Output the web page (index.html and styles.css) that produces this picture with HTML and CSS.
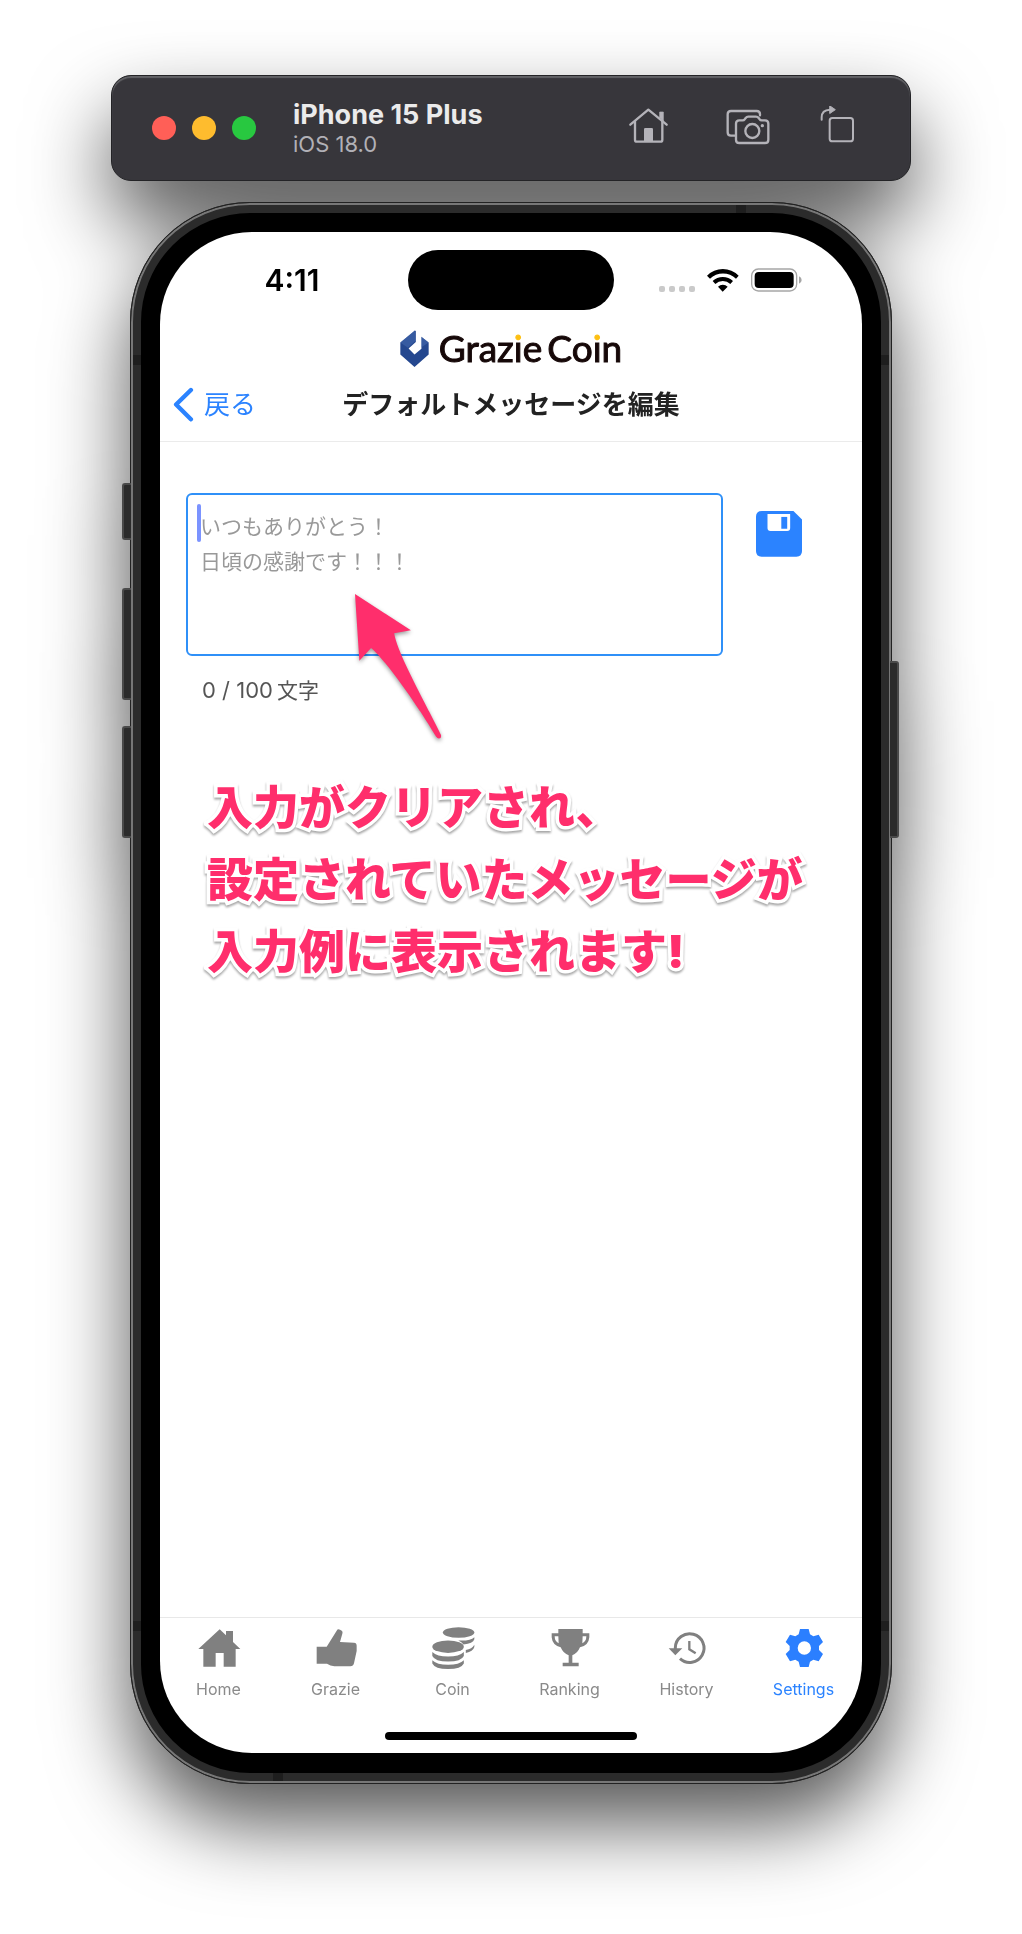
FILE: index.html
```html
<!DOCTYPE html>
<html lang="ja">
<head>
<meta charset="utf-8">
<meta name="viewport" content="width=device-width, initial-scale=1">
<title>Grazie Coin</title>
<link rel="stylesheet" href="styles.css">
</head>
<body>
<div class="simulator">
  <header class="toolbar">
    <div class="lights">
      <button class="light light-close" aria-label="Close"></button>
      <button class="light light-min" aria-label="Minimize"></button>
      <button class="light light-zoom" aria-label="Zoom"></button>
    </div>
    <div class="device">
      <strong class="device-name">iPhone 15 Plus</strong>
      <span class="device-os">iOS 18.0</span>
    </div>
    <div class="tools">
      <button class="tool" aria-label="Home">
        <svg viewBox="378 138 132 132" fill="none" stroke="currentColor" stroke-width="7" stroke-linecap="round" stroke-linejoin="round"><path d="M388 194 L442 149 L497 194"/><path d="M402 184V239Q402 245 408 245H478Q484 245 484 239V184"/><path d="M476 172V156H487V184Z" fill="currentColor" stroke-width="2"/><path d="M429 245V208Q429 204 433 204H452Q456 204 456 208V245Z" fill="currentColor" stroke="none"/></svg>
      </button>
      <button class="tool tool-shot" aria-label="Screenshot">
        <svg viewBox="676 138 132 132" fill="none" stroke="currentColor" stroke-width="7" stroke-linecap="round" stroke-linejoin="round"><path d="M703 227H691Q681 227 681 217V163Q681 153 691 153H768Q778 153 778 163V166"/><path d="M716 181H726Q730 181 732 178L735 174Q738 170 743 170H766Q771 170 774 174L777 178Q779 181 783 181H793Q803 181 803 191V239Q803 249 793 249H716Q706 249 706 239V191Q706 181 716 181Z"/><circle cx="755" cy="213" r="21"/><circle cx="785" cy="197" r="5" fill="currentColor" stroke="none"/></svg>
      </button>
      <button class="tool" aria-label="Rotate">
        <svg viewBox="943 138 132 132" fill="none" stroke="currentColor" stroke-width="6" stroke-linecap="round" stroke-linejoin="round"><rect x="987" y="174" width="70" height="70" rx="8"/><path d="M963 179V172Q963 150 988 149"/><path d="M988 138L1004 149L988 160Z" fill="currentColor" stroke-width="3"/></svg>
      </button>
    </div>
  </header>

  <div class="phone">
    <i class="key key-action"></i><i class="key key-up"></i><i class="key key-down"></i><i class="key key-side"></i>
    <i class="band band-top"></i><i class="band band-bottom"></i>
    <i class="band band-lt"></i><i class="band band-rt"></i><i class="band band-lb"></i><i class="band band-rb"></i>
    <div class="screen">
      <div class="status">
        <time class="clock">4:11</time>
        <div class="island"></div>
        <div class="indicators">
          <svg class="signal" viewBox="0 0 36 6" fill="#cacaca"><rect width="6" height="6" rx="2"/><rect x="10" width="6" height="6" rx="2"/><rect x="20" width="6" height="6" rx="2"/><rect x="30" width="6" height="6" rx="2"/></svg>
          <svg class="wifi" viewBox="618 230 96 72"><path d="M618 253A67 67 0 0 1 713 253L705 262A56 56 0 0 0 627 262ZM635 269A44 44 0 0 1 696 269L688 278A32 32 0 0 0 643 278ZM651 286A21 21 0 0 1 680 286L665 301Z"/></svg>
          <svg class="battery" viewBox="750 231 153 72"><rect x="752" y="234" width="135" height="66" rx="20" fill="none" stroke="#a6a6a6" stroke-width="4"/><rect x="761" y="243" width="117" height="48" rx="12"/><path d="M894 256Q902 259 902 267T894 278Z" fill="#a6a6a6"/></svg>
        </div>
      </div>

      <div class="brand">
        <svg class="brand-mark" viewBox="838 420 88 112"><path fill="#24478f" d="M883 421L839 458V494L882 532L925 494V458L903 440V477L882 494L864 476L886 456V423Z"/><path fill="#4f74b8" d="M883 421L839 458L862 474L886 452ZM903 440L925 458L903 472Z" opacity=".45"/></svg>
        <span class="brand-name">Graz<span class="dotted">i</span>e<span class="coin">Co<span class="dotted">i</span>n</span></span>
      </div>

      <nav class="navbar">
        <a class="back" href="#"><svg class="chevron" viewBox="160 592 62 104" fill="none" stroke="currentColor" stroke-width="13" stroke-linecap="round" stroke-linejoin="round"><path d="M213 601L169 644L213 688"/></svg>戻る</a>
        <h1 class="title">デフォルトメッセージを編集</h1>
      </nav>

      <main class="content">
        <form class="compose">
          <div class="field">
            <textarea class="message" aria-label="デフォルトメッセージ" maxlength="100" placeholder="いつもありがとう！&#10;日頃の感謝です！！！"></textarea>
            <i class="caret"></i>
            <svg class="arrow" viewBox="735 434 260 436"><path fill="#ff2e6c" d="M735 434L902 542L852 551C862 610 930 730 992 855Q994 866 986 866Q981 866 977 860C930 780 835 640 783 595L748 633Z"/></svg>
          </div>
          <button class="save" type="button" aria-label="保存"><svg viewBox="766 183 140 140"><path fill="#2b83ff" d="M784 183H880L906 209V305Q906 322 889 322H783Q766 322 766 305V200Q766 183 784 183Z"/><path fill="#fff" d="M801 192H870V235Q870 244 861 244H810Q801 244 801 235Z"/><path fill="#2b83ff" d="M843 201H861V237H843Z"/></svg></button>
        </form>
        <p class="counter">0 / 100<span class="unit">文字</span></p>
        <p class="callout">入力がクリアされ、<br>設定されていたメッセージが<br>入力例に表示されます!</p>
      </main>

      <footer class="tabbar">
        <a class="tab" href="#"><svg viewBox="229 105 132 132"><path d="M297 115L316 133V120H337V153L359 174H345V227H309V186H285V227H248V174H233Z"/></svg>Home</a>
        <a class="tab" href="#"><svg viewBox="579 105 132 132"><path d="M587 167H617L647 119Q650 113 657 116Q667 119 664 128L657 153L699 155Q708 156 707 166V180L699 217Q697 226 688 226H640Q628 225 618 218H587Z"/></svg>Grazie</a>
        <a class="tab" href="#"><svg viewBox="930 105 134 132"><ellipse cx="1014" cy="124" rx="48" ry="16"/><path d="M1062 138V144Q1058 157 1029 160Q1024 153 1013 148Q1050 150 1062 138ZM1062 161V168Q1058 182 1036 186V177Q1055 174 1062 161Z"/><ellipse cx="982" cy="167" rx="48" ry="19"/><path d="M934 183Q948 197 982 197T1030 183V195Q1022 212 982 212T934 195ZM934 208Q948 222 982 222T1030 208V218Q1022 235 982 235T934 218Z"/></svg>Coin</a>
        <a class="tab" href="#"><svg viewBox="142 105 132 132"><path fill-rule="evenodd" d="M173 114H246V127H266V139Q264 164 238 169Q230 188 215 193V215H234V226H186V215H204V193Q188 188 180 169Q155 163 153 139V127H173ZM173 136H162Q162 151 174 157ZM246 136L245 157Q257 151 257 136Z"/></svg>Ranking</a>
        <a class="tab" href="#"><svg viewBox="492 105 132 132"><path fill="none" stroke="currentColor" stroke-width="9" d="M523 174V170A43 43 0 1 1 537 203"/><path d="M503 172H544L523 193Z"/><path fill="none" stroke="currentColor" stroke-width="7" d="M565 150V175L584 187"/></svg>History</a>
        <a class="tab tab-active" href="#" aria-current="page"><svg viewBox="844 105 132 132"><path fill-rule="evenodd" d="M898 114H924L928 130L938 136L954 131L967 153L955 165V177L967 189L954 211L938 206L928 212L924 228H898L894 212L884 206L868 211L855 189L867 177V165L855 153L868 131L884 136L894 130ZM911 151A20 20 0 1 0 911 191A20 20 0 1 0 911 151Z"/></svg>Settings</a>
      </footer>
      <div class="home-indicator"></div>
    </div>
  </div>
</div>
</body>
</html>
```
FILE: styles.css
```css
* { box-sizing: border-box; }

body {
  margin: 0;
  background: #fff;
  font-family: Inter, "Noto Sans CJK JP", sans-serif;
}

button { padding: 0; border: 0; background: none; font: inherit; }
a { text-decoration: none; }
svg { display: block; }

.simulator {
  display: flex;
  flex-direction: column;
  gap: 21px;
  max-width: 840px;
  min-height: 100vh;
  margin: 0 auto;
  padding: 75px 20px 150px;
  filter: drop-shadow(0 40px 40px rgba(0, 0, 0, .66));
}

/* Simulator window bar */
.toolbar {
  display: flex;
  align-items: center;
  height: 106px;
  padding: 0 51px 0 40px;
  border: 1px solid #232326;
  border-radius: 20px;
  background: #37363b;
  box-shadow: inset 0 2px 1px #626266;
}
.lights { display: flex; gap: 16px; }
.light { width: 24px; height: 24px; border-radius: 50%; }
.light-close { background: #ff5f57; }
.light-min { background: #febc2e; }
.light-zoom { background: #28c840; }
.device { display: flex; flex-direction: column; margin-left: 37px; }
.device-name { font-size: 27px; line-height: 32px; color: #ebebeb; }
.device-os { font-size: 22px; line-height: 26px; color: #b1b0b6; }
.tools { display: flex; gap: 45px; margin-left: auto; color: #b4b3b9; }
.tool { color: inherit; }
.tool-shot { margin-left: 10px; }
.tool svg { width: 44px; height: 44px; }

/* Phone body */
.phone {
  position: relative;
  display: flex;
  flex: 1;
  margin: 0 19px;
  padding: 19px 19px 20px;
  border: 11px solid #2b2b2b;
  border-radius: 120px;
  background: #000;
  box-shadow: inset 0 0 0 1px #000;
}
.phone::before {
  content: "";
  position: absolute;
  inset: -11px;
  border: 1px solid #222;
  border-radius: 120px;
  box-shadow: inset 0 0 0 2px #777;
}
.key {
  position: absolute;
  width: 9px;
  border: 2px solid #4a4a4a;
  background: #2b2b2b;
}
.key-action { left: -19px; top: 270px; height: 57px; border-right: 0; border-radius: 3px 0 0 3px; }
.key-up { left: -19px; top: 375px; height: 112px; border-right: 0; border-radius: 3px 0 0 3px; }
.key-down { left: -19px; top: 513px; height: 112px; border-right: 0; border-radius: 3px 0 0 3px; }
.key-side { right: -18px; top: 448px; height: 177px; border-left: 0; border-radius: 0 3px 3px 0; }
.band { position: absolute; width: 8px; height: 10px; background: #1e1e1e; }
.band-top { top: -8px; right: 135px; width: 10px; height: 8px; }
.band-bottom { bottom: -8px; left: 132px; width: 10px; height: 8px; }
.band-lt { left: -8px; top: 142px; }
.band-rt { right: -8px; top: 142px; }
.band-lb { left: -8px; bottom: 142px; }
.band-rb { right: -8px; bottom: 142px; }

.screen {
  display: flex;
  flex: 1;
  flex-direction: column;
  min-width: 0;
  border-radius: 92px;
  background: #fff;
  overflow: hidden;
}

/* Status bar */
.status {
  display: grid;
  grid-template-columns: 1fr 206px 1fr;
  align-items: center;
  height: 96px;
}
.clock { justify-self: center; margin-left: 16px; font-size: 30px; font-weight: 600; line-height: 32px; }
.island { height: 60px; border-radius: 30px; background: #000; }
.indicators { display: flex; align-items: flex-end; justify-self: center; gap: 12px; margin-right: 16px; padding-bottom: 1px; }
.signal { width: 36px; height: 6px; }
.wifi { width: 32px; height: 24px; }
.battery { width: 51px; height: 24px; }

/* Brand */
.brand { display: flex; align-items: center; justify-content: center; gap: 10px; height: 40px; }
.brand-mark { width: 29px; height: 37px; }
.brand-name {
  font-family: Lato, sans-serif;
  font-size: 37px;
  line-height: 44px;
  color: #160808;
  -webkit-text-stroke: 1px #160808;
}
.coin { margin-left: 5px; }
.dotted {
  background: linear-gradient(#fdbf12 17px, #160808 17px);
  background-clip: text;
  -webkit-background-clip: text;
  color: transparent;
  -webkit-text-stroke: 1px transparent;
}

/* Navigation bar */
.navbar {
  display: grid;
  grid-template-columns: 1fr auto 1fr;
  align-items: center;
  height: 74px;
  padding: 0 13px;
  border-bottom: 1px solid #ebebeb;
}
.back { display: flex; align-items: center; gap: 10px; color: #2b83ff; font-size: 26px; line-height: 36px; }
.chevron { width: 21px; height: 35px; }
.title { margin: 0; color: #222; font-size: 26px; font-weight: 700; line-height: 36px; }

/* Message form */
.content { flex: 1; padding: 51px 60px 0 26px; }
.compose { display: flex; align-items: flex-start; gap: 33px; }
.field { position: relative; flex: 1; }
.message {
  display: block;
  width: 100%;
  height: 163px;
  padding: 14px 12px;
  border: 2px solid #2f90f8;
  border-radius: 6px;
  outline: 0;
  background: #fff;
  font: inherit;
  font-size: 21px;
  line-height: 35px;
  resize: none;
}
.message::placeholder { color: #999; opacity: 1; }
.caret { position: absolute; left: 11px; top: 11px; width: 4px; height: 38px; border-radius: 2px; background: #7b93ff; }
.arrow {
  position: absolute;
  left: 169px;
  top: 101px;
  width: 87px;
  height: 146px;
  overflow: visible;
  filter: drop-shadow(0 2px 2px rgba(0, 0, 0, .4));
}
.save { margin-top: 18px; }
.save svg { width: 46px; height: 46px; }
.counter { margin: 18px 0 0 16px; color: #555; font-size: 22px; line-height: 32px; }
.unit { margin-left: 4px; font-size: 21px; }
.callout {
  margin: 64px 0 0 21px;
  color: #ff2e6c;
  font-size: 46px;
  font-weight: 900;
  line-height: 72px;
  white-space: nowrap;
  -webkit-text-stroke: 7px #fff;
  paint-order: stroke fill;
  filter: drop-shadow(0 2px 1px rgba(0, 0, 0, .35));
}

/* Tab bar */
.tabbar { display: flex; height: 115px; padding-top: 8px; border-top: 1px solid #e8e8e8; }
.tab {
  display: flex;
  flex: 1;
  flex-direction: column;
  align-items: center;
  gap: 9px;
  color: #8a8a8a;
  font-size: 16px;
  line-height: 20px;
}
.tab svg { width: 44px; height: 44px; fill: #808080; color: #808080; }
.tab-active { color: #2b83ff; }
.tab-active svg { fill: #2b7fff; }
.home-indicator { width: 252px; height: 8px; margin: 0 auto 13px; border-radius: 4px; background: #000; }
```
